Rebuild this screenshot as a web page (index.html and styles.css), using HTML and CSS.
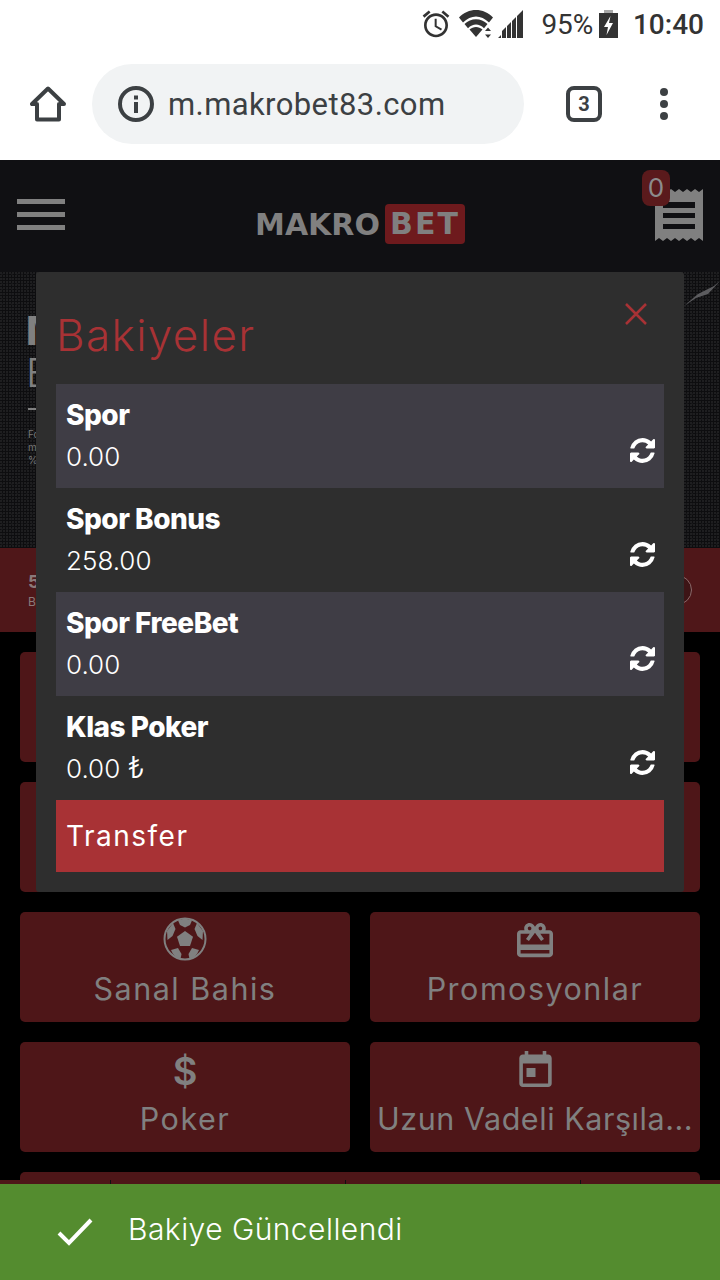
FILE: index.html
```html
<!DOCTYPE html>
<html lang="en">
<head>
    <meta charset="UTF-8">
    <meta name="viewport" content="width=device-width, initial-scale=1.0">
    <title>Makrobet</title>
    <link rel="stylesheet" href="styles.css">
</head>
<body>
    <svg class="defs" width="0" height="0">
        <symbol id="refresh" viewBox="128 128 1536 1536">
            <path d="M1639 1056q0 5-1 7-64 268-268 434.5t-478 166.5q-146 0-282.5-55t-243.5-157l-129 129q-19 19-45 19t-45-19-19-45v-448q0-26 19-45t45-19h448q26 0 45 19t19 45-19 45l-137 137q71 66 161 102t187 36q134 0 250-65t186-179q11-17 53-117 8-23 30-23h192q13 0 22.5 9.5t9.5 22.5zm25-800v448q0 26-19 45t-45 19h-448q-26 0-45-19t-19-45 19-45l138-138q-148-137-349-137-134 0-250 65t-186 179q-11 17-53 117-8 23-30 23h-199q-13 0-22.5-9.5t-9.5-22.5v-7q65-268 270-434.5t480-166.5q146 0 284 55.5t245 156.5l130-129q19-19 45-19t45 19 19 45z"/>
        </symbol>
    </svg>

    <div class="status-bar">
        <svg class="st-alarm" viewBox="0 0 24 24"><path d="M22 5.72l-4.6-3.86-1.29 1.53 4.6 3.86L22 5.72zM7.88 3.39L6.6 1.86 2 5.71l1.29 1.53 4.59-3.85zM12.5 8H11v6l4.75 2.85.75-1.23-4-2.37V8zM12 4c-4.97 0-9 4.03-9 9s4.03 9 9 9 9-4.03 9-9-4.03-9-9-9zm0 16c-3.87 0-7-3.13-7-7s3.13-7 7-7 7 3.13 7 7-3.13 7-7 7z"/></svg>
        <svg class="st-wifi" viewBox="0 0 34 28">
            <path d="M0 7.500C9-2.500 25-2.500 34 7.500l-4 5C22 4.500 12 4.500 4 12.500z"/>
            <path d="M5.500 14C12 7.500 22 7.500 28.500 14l-3.500 4.300c-5-5-11-5-16 0z"/>
            <path d="M10.500 19.500c3.700-3.500 9.300-3.500 13 0L17 27z"/>
            <path d="M29 17.500l3 3.500h-6zM29 28l3-3.500h-6z"/>
        </svg>
        <svg class="st-signal" viewBox="0 0 28 28">
            <path d="M0 28l3-3v3zM4 28v-7l4-4v11zM9 28V16l4-4v16zM14 28V11l4-4v21zM19 28V6l6-6v28z"/>
        </svg>
        <span class="st-percent">95%</span>
        <svg class="st-battery" viewBox="0 0 19 28">
            <rect x="5" y="0" width="9" height="3" fill="#a8a8a8"/>
            <rect x="0" y="3" width="19" height="25" fill="#333"/>
            <path d="M11.500 6L5 17h4l-1.500 8L14 13h-4z" fill="#fff"/>
        </svg>
        <span class="st-time">10:40</span>
    </div>

    <div class="browser-bar">
        <svg class="home-icon" viewBox="0 0 36 36"><path d="M18 2.500L2 18h5v15.500h22V18h5z"/></svg>
        <div class="url-pill">
            <svg class="info-icon" viewBox="0 0 36 36">
                <circle cx="18" cy="18" r="16"/>
                <rect x="16" y="16" width="4" height="11"/>
                <rect x="16" y="9.500" width="4" height="4"/>
            </svg>
            <span class="url-text">m.makrobet83.com</span>
        </div>
        <div class="tab-count">3</div>
        <div class="menu-dots"><i></i><i></i><i></i></div>
    </div>

    <div class="site">
        <header class="site-header">
            <div class="burger"><i></i><i></i><i></i></div>
            <div class="logo">
                <span class="logo-makro">MAKRO</span>
                <span class="logo-bet">BET</span>
            </div>
            <div class="slip">
                <svg class="slip-icon" viewBox="0 0 48 52">
                    <path fill-rule="evenodd" d="M0 0l4 3 4-3 4 3 4-3 4 3 4-3 4 3 4-3 4 3 4-3 4 3 4-3v52l-4-3-4 3-4-3-4 3-4-3-4 3-4-3-4 3-4-3-4 3-4-3-4 3zM8 13v6h32v-6zM8 24v5h32v-5zM8 35v5h32v-5z"/>
                </svg>
                <span class="slip-badge">0</span>
            </div>
        </header>

        <section class="hero">
            <div class="hero-title">M</div>
            <div class="hero-sub">E</div>
            <div class="hero-rule"></div>
            <p class="hero-text">Fo<br>m<br>%</p>
            <svg class="hero-bird" viewBox="0 0 36 30"><path d="M0 28L14 16 30 8 36 3 24 16 12 20z"/></svg>
        </section>

        <section class="promo-strip">
            <div>
                <div class="promo-num">5</div>
                <div class="promo-sub">B</div>
            </div>
            <div class="promo-circle"></div>
        </section>

        <section class="tiles">
            <div class="tile"></div>
            <div class="tile"></div>
            <div class="tile"></div>
            <div class="tile"></div>
            <div class="tile">
                <svg class="tile-icon" viewBox="0 0 44 44">
                    <circle class="ball-ring" cx="22" cy="22" r="20.500"/>
                    <path d="M22 14l8 5.800-3 9.200H17l-3-9.200z"/>
                    <path d="M15 3.500C19 1.500 25 1.500 29 3.500L27 8l-5 2.500L17 8z"/>
                    <path d="M4 14l6-8 2.500 6-3 7-5 4z"/>
                    <path d="M40 14l-6-8-2.500 6 3 7 5 4z"/>
                    <path d="M8 33l7-2 3.500 6-1 5C13 41 10 38 8 33z"/>
                    <path d="M36 33l-7-2-3.500 6 1 5C31 41 34 38 36 33z"/>
                </svg>
                <span class="tile-label">Sanal Bahis</span>
            </div>
            <div class="tile">
                <svg class="tile-icon icon-gift" viewBox="2 2 20 20"><path d="M20 6h-2.180c.11-.31.18-.65.18-1 0-1.660-1.340-3-3-3-1.050 0-1.960.54-2.500 1.350l-.5.67-.5-.68C10.960 2.540 10.050 2 9 2 7.340 2 6 3.340 6 5c0 .35.07.69.18 1H4c-1.110 0-1.990.89-1.990 2L2 19c0 1.110.89 2 2 2h16c1.110 0 2-.89 2-2V8c0-1.110-.89-2-2-2zm-5-2c.55 0 1 .45 1 1s-.45 1-1 1-1-.45-1-1 .45-1 1-1zM9 4c.55 0 1 .45 1 1s-.45 1-1 1-1-.45-1-1 .45-1 1-1zm11 15H4v-2h16v2zm0-5H4V8h5.080L7 10.830 8.620 12 11 8.760l1-1.360 1 1.360L15.380 12 17 10.830 14.920 8H20v6z"/></svg>
                <span class="tile-label">Promosyonlar</span>
            </div>
            <div class="tile">
                <span class="tile-dollar">$</span>
                <span class="tile-label">Poker</span>
            </div>
            <div class="tile">
                <svg class="tile-icon icon-event" viewBox="3 1 18 20"><path fill-rule="evenodd" d="M6 1h2v2h8V1h2v2h1c1.100 0 2 .9 2 2v14c0 1.100-.9 2-2 2H5c-1.100 0-2-.9-2-2V5c0-1.100.9-2 2-2h1zM5 8v11h14V8zM7 10.500h5v5H7z"/></svg>
                <span class="tile-label tile-label-long">Uzun Vadeli Karşıla...</span>
            </div>
            <div class="tile tile-wide"></div>
        </section>

        <nav class="bottom-nav">
            <div class="nav-item nav-item-first"></div>
            <div class="nav-item"></div>
            <div class="nav-item"></div>
            <div class="nav-item nav-item-last"></div>
        </nav>

        <div class="modal">
            <div class="modal-head">
                <h2 class="modal-title">Bakiyeler</h2>
                <svg class="modal-close" viewBox="0 0 22 22"><path d="M1 1l20 20M21 1L1 21"/></svg>
            </div>
            <div class="balance alt">
                <div>
                    <div class="balance-name">Spor</div>
                    <div class="balance-value">0.00</div>
                </div>
                <svg class="refresh"><use href="#refresh"/></svg>
            </div>
            <div class="balance">
                <div>
                    <div class="balance-name">Spor Bonus</div>
                    <div class="balance-value">258.00</div>
                </div>
                <svg class="refresh"><use href="#refresh"/></svg>
            </div>
            <div class="balance alt">
                <div>
                    <div class="balance-name">Spor FreeBet</div>
                    <div class="balance-value">0.00</div>
                </div>
                <svg class="refresh"><use href="#refresh"/></svg>
            </div>
            <div class="balance">
                <div>
                    <div class="balance-name">Klas Poker</div>
                    <div class="balance-value">0.00 <span class="currency">₺</span></div>
                </div>
                <svg class="refresh"><use href="#refresh"/></svg>
            </div>
            <button class="transfer">Transfer</button>
        </div>

        <div class="toast">
            <svg class="toast-check" viewBox="0 0 36 28"><path d="M2 15l10 10L34 2"/></svg>
            <span class="toast-text">Bakiye Güncellendi</span>
        </div>
    </div>
</body>
</html>
```

FILE: styles.css
```css
* {
    box-sizing: border-box;
}

body {
    margin: 0;
    width: 720px;
    height: 1280px;
    overflow: hidden;
    background: #fff;
    font-family: 'Inter', 'Noto Sans', sans-serif;
}

.defs {
    position: absolute;
}

/* phone status bar */
.status-bar {
    height: 52px;
    padding-right: 16px;
    padding-bottom: 4px;
    display: flex;
    align-items: center;
    justify-content: flex-end;
    color: #333;
    font-family: 'Roboto', sans-serif;
    font-size: 28px;
}

.status-bar svg {
    fill: #333;
    display: block;
}

.st-alarm {
    width: 32px;
    height: 32px;
    margin-right: 7px;
}

.st-wifi {
    width: 34px;
    height: 28px;
    margin-right: 5px;
}

.st-signal {
    width: 28px;
    height: 28px;
    margin-right: 16px;
}

.st-percent {
    letter-spacing: -0.2px;
    margin-right: 6px;
}

.st-battery {
    width: 19px;
    height: 28px;
    margin-right: 15px;
}

.st-time {
    font-weight: 500;
}

/* chrome toolbar */
.browser-bar {
    height: 108px;
    padding-left: 30px;
    padding-bottom: 4px;
    display: flex;
    align-items: center;
}

.home-icon {
    width: 36px;
    height: 36px;
    fill: none;
    stroke: #3c4043;
    stroke-width: 4;
    stroke-linejoin: round;
}

.url-pill {
    width: 432px;
    height: 80px;
    margin-left: 26px;
    padding-left: 26px;
    border-radius: 40px;
    background: #f1f3f4;
    display: flex;
    align-items: center;
}

.info-icon {
    width: 36px;
    height: 36px;
    fill: #3c4043;
}

.info-icon circle {
    fill: none;
    stroke: #3c4043;
    stroke-width: 4;
}

.url-text {
    margin-left: 14px;
    font-family: 'Roboto', sans-serif;
    font-size: 31px;
    letter-spacing: 0.4px;
    color: #3c4043;
}

.tab-count {
    width: 36px;
    height: 36px;
    margin-left: 42px;
    border: 4px solid #3c4043;
    border-radius: 8px;
    display: flex;
    align-items: center;
    justify-content: center;
    font-family: 'Roboto', sans-serif;
    font-size: 20px;
    font-weight: 700;
    color: #3c4043;
}

.menu-dots {
    margin-left: 58px;
    display: flex;
    flex-direction: column;
    gap: 4px;
}

.menu-dots i {
    display: block;
    width: 8px;
    height: 8px;
    border-radius: 50%;
    background: #3c4043;
}

/* site behind the dialog */
.site {
    position: relative;
    height: 1120px;
    overflow: hidden;
    background: #000;
}

.site-header {
    height: 112px;
    padding: 0 17px;
    background: #101013;
    display: flex;
    align-items: flex-start;
    justify-content: space-between;
}

.burger {
    margin-top: 39px;
    display: flex;
    flex-direction: column;
    gap: 8px;
}

.burger i {
    display: block;
    width: 48px;
    height: 5px;
    background: #808080;
}

.logo {
    margin-top: 44px;
    display: flex;
    align-items: center;
    gap: 5px;
    font-family: 'DejaVu Sans', sans-serif;
    font-weight: 700;
    font-size: 30px;
    color: #808080;
}

.logo-bet {
    width: 80px;
    height: 40px;
    border-radius: 4px;
    background: #6e1a1d;
    letter-spacing: 2px;
    text-align: center;
    line-height: 40px;
}

.slip {
    position: relative;
    width: 48px;
    height: 52px;
    margin-top: 29px;
}

.slip-icon {
    display: block;
    width: 48px;
    height: 52px;
    fill: #808080;
}

.slip-badge {
    position: absolute;
    top: -19px;
    left: -13px;
    width: 28px;
    height: 36px;
    border-radius: 8px;
    background: #5a1a1c;
    color: #8c8c8c;
    font-size: 26px;
    line-height: 36px;
    text-align: center;
}

.hero {
    position: relative;
    height: 276px;
    padding: 39px 26px 0;
    overflow: hidden;
    background-color: #0d0d0f;
    background-image:
        radial-gradient(circle at 1px 1px, #1f1f21 0.7px, transparent 1px),
        radial-gradient(circle at 2px 2px, #161618 0.7px, transparent 1px);
    background-size: 3px 3px, 5px 5px;
    color: #808080;
}

.hero-title {
    height: 40px;
    font-size: 40px;
    font-weight: 800;
    line-height: 40px;
}

.hero-sub {
    height: 40px;
    margin-top: 2px;
    font-size: 40px;
    font-weight: 300;
    line-height: 40px;
}

.hero-rule {
    width: 60px;
    height: 2px;
    margin-top: 15px;
    margin-left: 2px;
    background: #808080;
}

.hero-text {
    margin: 18px 0 0 2px;
    font-size: 10px;
    line-height: 13px;
    color: #777;
}

.hero-bird {
    position: absolute;
    top: 6px;
    right: 0;
    width: 36px;
    height: 30px;
    fill: #5c5c5f;
}

.promo-strip {
    height: 84px;
    padding: 0 28px;
    background: #4f1719;
    display: flex;
    align-items: center;
    justify-content: space-between;
    color: #8a7a7a;
}

.promo-num {
    font-size: 18px;
    font-weight: 700;
    line-height: 24px;
}

.promo-sub {
    font-size: 12px;
    line-height: 16px;
}

.promo-circle {
    width: 30px;
    height: 30px;
    border: 1px solid #8a6a6a;
    border-radius: 50%;
    background: #3d1416;
}

.tiles {
    padding: 20px;
    display: grid;
    grid-template-columns: 330px 330px;
    grid-auto-rows: 110px;
    gap: 20px;
}

.tile {
    min-width: 0;
    padding: 5px 7px 0;
    border-radius: 5px;
    background: #4e1618;
    display: flex;
    flex-direction: column;
    align-items: center;
    color: #808080;
}

.tile-wide {
    grid-column: span 2;
}

.tile-icon {
    display: block;
    width: 44px;
    height: 44px;
    flex-shrink: 0;
    fill: #808080;
}

.icon-gift {
    width: 36px;
    height: 36px;
    margin: 6px 0 2px;
}

.icon-event {
    width: 33px;
    height: 36px;
    margin: 4px 0;
}

.ball-ring {
    fill: none;
    stroke: #808080;
    stroke-width: 2;
}

.tile-dollar {
    height: 44px;
    font-size: 38px;
    font-weight: 600;
    line-height: 48px;
}

.tile-label {
    width: 100%;
    margin-top: 7px;
    font-size: 30.5px;
    line-height: 42px;
    letter-spacing: 1.5px;
    text-align: center;
    white-space: nowrap;
}

.tile-label-long {
    letter-spacing: 0.55px;
}

.bottom-nav {
    position: absolute;
    left: 0;
    right: 0;
    bottom: 0;
    height: 100px;
    background: #4e1618;
    display: flex;
}

.nav-item {
    width: 235px;
    border-right: 1px solid #111;
}

.nav-item-first {
    width: 111px;
}

.nav-item-last {
    flex: 1;
    border-right: none;
}

/* balances dialog */
.modal {
    position: absolute;
    top: 112px;
    left: 36px;
    width: 648px;
    padding: 0 20px 20px;
    border-radius: 3px;
    background: #2e2e2e;
}

.modal-head {
    height: 112px;
    padding-right: 17px;
    display: flex;
    align-items: flex-start;
    justify-content: space-between;
}

.modal-title {
    margin: 36px 0 0;
    font-size: 44px;
    font-weight: 300;
    line-height: 54px;
    letter-spacing: 1.4px;
    color: #a83235;
}

.modal-close {
    width: 22px;
    height: 22px;
    margin-top: 31px;
    fill: none;
    stroke: #a83235;
    stroke-width: 2.5;
}

.balance {
    height: 104px;
    padding: 10px 10px 0;
    display: flex;
    align-items: flex-start;
    justify-content: space-between;
    color: #fff;
}

.balance.alt {
    background: #3f3d45;
}

.balance-name {
    font-size: 28px;
    font-weight: 800;
    line-height: 42px;
    letter-spacing: -0.5px;
}

.balance-value {
    font-size: 26px;
    font-weight: 300;
    line-height: 42px;
}

.currency {
    font-size: 30px;
    line-height: 0;
}

.refresh {
    width: 25px;
    height: 25px;
    margin-top: 44px;
    margin-right: -1px;
    fill: #fff;
}

.transfer {
    display: block;
    width: 100%;
    height: 72px;
    padding: 0 10px;
    border: none;
    background: #a83235;
    color: #fff;
    font-family: inherit;
    font-size: 28px;
    font-weight: 400;
    letter-spacing: 1.5px;
    text-align: left;
}

/* toast */
.toast {
    position: absolute;
    left: 0;
    right: 0;
    bottom: 0;
    height: 96px;
    padding-left: 57px;
    background: #548c2f;
    display: flex;
    align-items: center;
    color: #fff;
}

.toast-check {
    width: 36px;
    height: 28px;
    fill: none;
    stroke: #fff;
    stroke-width: 4;
}

.toast-text {
    margin-left: 35px;
    margin-bottom: 6px;
    font-size: 30px;
    font-weight: 300;
    letter-spacing: 0.45px;
}
```
